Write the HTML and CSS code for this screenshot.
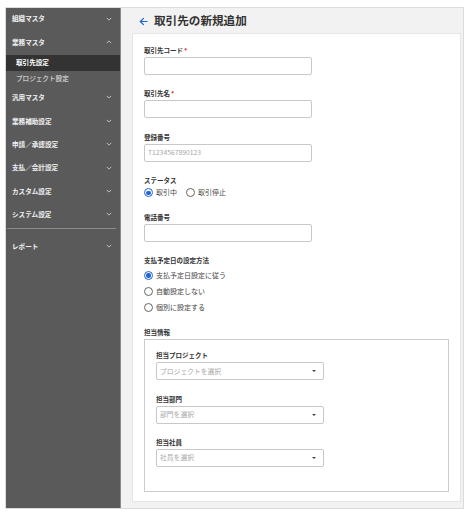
FILE: index.html
```html
<!DOCTYPE html>
<html lang="ja">
<head>
<meta charset="utf-8">
<title>取引先の新規追加</title>
<link rel="stylesheet" href="styles.css">
</head>
<body>
<div class="app">
  <nav class="sidebar">
    <div class="nav-item"><span>組織マスタ</span><svg class="chev" viewBox="0 0 8 5"><polyline points="1,1 4,4 7,1"/></svg></div>
    <div class="nav-item"><span>業務マスタ</span><svg class="chev" viewBox="0 0 8 5"><polyline points="1,4 4,1 7,4"/></svg></div>
    <div class="nav-sub active">取引先設定</div>
    <div class="nav-sub">プロジェクト設定</div>
    <div class="nav-item"><span>汎用マスタ</span><svg class="chev" viewBox="0 0 8 5"><polyline points="1,1 4,4 7,1"/></svg></div>
    <div class="nav-item"><span>業務補助設定</span><svg class="chev" viewBox="0 0 8 5"><polyline points="1,1 4,4 7,1"/></svg></div>
    <div class="nav-item"><span>申請／承認設定</span><svg class="chev" viewBox="0 0 8 5"><polyline points="1,1 4,4 7,1"/></svg></div>
    <div class="nav-item"><span>支払／会計設定</span><svg class="chev" viewBox="0 0 8 5"><polyline points="1,1 4,4 7,1"/></svg></div>
    <div class="nav-item"><span>カスタム設定</span><svg class="chev" viewBox="0 0 8 5"><polyline points="1,1 4,4 7,1"/></svg></div>
    <div class="nav-item"><span>システム設定</span><svg class="chev" viewBox="0 0 8 5"><polyline points="1,1 4,4 7,1"/></svg></div>
    <div class="nav-divider"></div>
    <div class="nav-item"><span>レポート</span><svg class="chev" viewBox="0 0 8 5"><polyline points="1,1 4,4 7,1"/></svg></div>
  </nav>
  <main class="main">
    <header class="header">
      <svg class="back" viewBox="0 0 10 10"><line x1="1.5" y1="5" x2="9" y2="5"/><polyline points="5,1.5 1.5,5 5,8.5"/></svg>
      <h1 class="title">取引先の新規追加</h1>
    </header>
    <section class="card">
      <div class="field">
        <div class="label">取引先コード<span class="req">*</span></div>
        <div class="input"></div>
      </div>
      <div class="field">
        <div class="label">取引先名<span class="req">*</span></div>
        <div class="input"></div>
      </div>
      <div class="field">
        <div class="label">登録番号</div>
        <div class="input"><span class="ph">T1234567890123</span></div>
      </div>
      <div class="field">
        <div class="label">ステータス</div>
        <div class="radio-inline">
          <label class="radio"><span class="dot on"></span>取引中</label>
          <label class="radio"><span class="dot"></span>取引停止</label>
        </div>
      </div>
      <div class="field">
        <div class="label">電話番号</div>
        <div class="input"></div>
      </div>
      <div class="field field-stack">
        <div class="label">支払予定日の設定方法</div>
        <div class="radio-stack">
          <label class="radio"><span class="dot on"></span>支払予定日設定に従う</label>
          <label class="radio"><span class="dot"></span>自動設定しない</label>
          <label class="radio"><span class="dot"></span>個別に設定する</label>
        </div>
      </div>
      <div class="field last">
        <div class="label">担当情報</div>
        <div class="group">
          <div class="field">
            <div class="label">担当プロジェクト</div>
            <div class="select"><span class="ph">プロジェクトを選択</span><span class="caret"></span></div>
          </div>
          <div class="field">
            <div class="label">担当部門</div>
            <div class="select"><span class="ph">部門を選択</span><span class="caret"></span></div>
          </div>
          <div class="field">
            <div class="label">担当社員</div>
            <div class="select"><span class="ph">社員を選択</span><span class="caret"></span></div>
          </div>
        </div>
      </div>
    </section>
  </main>
</div>
</body>
</html>
```
FILE: styles.css
```css
* { box-sizing: border-box; }
html, body { margin: 0; padding: 0; background: #ffffff; }
body {
  font-family: "Noto Sans CJK JP", "Noto Sans", sans-serif;
  color: #333333;
}
.app {
  display: flex;
  margin: 7px 0 0 5px;
  width: 459px;
  height: 502px;
  border: 1px solid #dcdcdc;
}
.sidebar {
  width: 116px;
  background: #5a5a5a;
  border-right: 1px solid #8a8a8a;
  color: #f2f2f2;
  display: flex;
  flex-direction: column;
}
.nav-item {
  height: 23.4px;
  flex-shrink: 0;
  display: flex;
  align-items: center;
  justify-content: space-between;
  padding: 0 8px 2px 6px;
  font-size: 6.6px;
  font-weight: 700;
  line-height: 1;
}
.chev {
  width: 6px;
  height: 4px;
  fill: none;
  stroke: #d8d8d8;
  stroke-width: 1.1;
}
.nav-sub {
  height: 16px;
  flex-shrink: 0;
  display: flex;
  align-items: center;
  padding-left: 10px;
  font-size: 6.6px;
  line-height: 1;
  color: #eeeeee;
}
.nav-sub.active {
  background: #333333;
  font-weight: 700;
  color: #ffffff;
}
.nav-divider {
  height: 1px;
  flex-shrink: 0;
  background: #8c8c8c;
  margin: 1px 4px 6px 1px;
}
.main {
  flex: 1;
  background: #f2f2f2;
  display: flex;
  flex-direction: column;
  padding: 0 2px 6px 11px;
}
.header {
  height: 25px;
  flex-shrink: 0;
  display: flex;
  align-items: center;
  padding: 1px 0 0 7px;
}
.back {
  width: 9px;
  height: 9px;
  fill: none;
  stroke: #1f63d8;
  stroke-width: 1.3;
  stroke-linecap: round;
  stroke-linejoin: round;
  margin-right: 6px;
}
.title {
  margin: 0;
  font-size: 11.6px;
  font-weight: 700;
  line-height: 1;
  color: #333333;
}
.card {
  flex: 1;
  min-height: 0;
  background: #ffffff;
  border: 1px solid #e6e6e6;
  padding: 11px 11px 0 11px;
}
.field { margin-bottom: 13.3px; }
.field.field-stack { margin-bottom: 11.3px; }
.field.last { margin-bottom: 0; }
.label {
  height: 10px;
  line-height: 10px;
  font-size: 6.5px;
  font-weight: 700;
  color: #333333;
  margin-bottom: 2px;
}
.req { color: #e0303a; margin-left: 1px; }
.input, .select {
  width: 168px;
  height: 18px;
  border: 1px solid #c8c8c8;
  border-radius: 2px;
  background: #ffffff;
  display: flex;
  align-items: center;
  padding: 0 3px;
}
.ph {
  font-size: 6.8px;
  color: #a8a8a8;
  line-height: 1;
}
.select { justify-content: space-between; padding: 0 7px 0 3px; }
.caret {
  width: 0;
  height: 0;
  border-left: 2px solid transparent;
  border-right: 2px solid transparent;
  border-top: 2.5px solid #444444;
}
.radio-inline {
  height: 12px;
  display: flex;
  align-items: center;
  gap: 9px;
}
.radio-stack {
  display: flex;
  flex-direction: column;
  margin-top: 1.3px;
}
.radio-stack .radio { height: 16px; }
.radio {
  display: flex;
  align-items: center;
  font-size: 7px;
  color: #444444;
  line-height: 1;
}
.dot {
  width: 9px;
  height: 9px;
  border: 1px solid #666666;
  border-radius: 50%;
  margin-right: 3px;
  display: flex;
  align-items: center;
  justify-content: center;
}
.dot.on { border-color: #1f63d8; }
.dot.on::after {
  content: "";
  width: 4.5px;
  height: 4.5px;
  border-radius: 50%;
  background: #1f63d8;
}
.group {
  width: 305px;
  border: 1px solid #cccccc;
  padding: 10.5px 11px 10.5px 11px;
}
```
